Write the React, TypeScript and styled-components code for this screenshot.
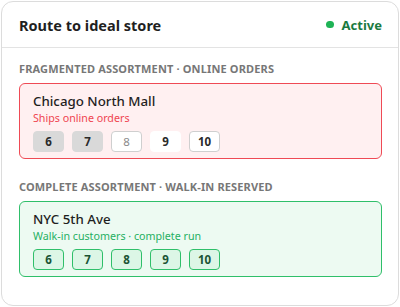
import React from "react"
import styled, { createGlobalStyle } from "styled-components"

const GlobalStyle = createGlobalStyle`
	* {
		box-sizing: border-box;
	}
	body {
		margin: 0;
		background: #ffffff;
		font-family: "Noto Sans", "Open Sans", sans-serif;
	}
`

type Tone = "red" | "green"
type ChipKind = "filled" | "muted" | "plain" | "outlined" | "good"

const tones = {
	red: { border: "#ef4a55", bg: "#fff0f1", sub: "#ef4450" },
	green: { border: "#2fbf6a", bg: "#edfaf2", sub: "#26b062" },
}

const chipStyles: Record<ChipKind, { bg: string; border: string; color: string; weight: number }> = {
	filled: { bg: "#d9d9d9", border: "#d9d9d9", color: "#2a2a2a", weight: 700 },
	muted: { bg: "#ffffff", border: "#cfcfcf", color: "#8a8a8a", weight: 400 },
	plain: { bg: "#ffffff", border: "#ffffff", color: "#2a2a2a", weight: 700 },
	outlined: { bg: "#ffffff", border: "#cfcfcf", color: "#2a2a2a", weight: 700 },
	good: { bg: "#dcf6e6", border: "#2fbf6a", color: "#1a5434", weight: 700 },
}

const Panel = styled.div`
	margin: 1px;
	width: 398px;
	height: 305px;
	border: 1.5px solid #dcdcdc;
	border-radius: 12px;
	background: #ffffff;
	overflow: hidden;
`

const Header = styled.div`
	display: flex;
	align-items: center;
	justify-content: space-between;
	height: 46px;
	padding: 0 16px 0 17px;
	border-bottom: 1.5px solid #e3e3e3;
`

const Title = styled.h1`
	margin: 0;
	font-size: 14.5px;
	font-weight: 700;
	color: #1f1f1f;
`

const Status = styled.div`
	display: flex;
	align-items: center;
	gap: 8px;
	font-size: 13px;
	font-weight: 700;
	color: #1b7a3f;
`

const Dot = styled.span`
	width: 7.5px;
	height: 7.5px;
	border-radius: 50%;
	background: #1fb356;
`

const Body = styled.div`
	display: flex;
	flex-direction: column;
	padding: 14px 16px 0 17px;
`

const Section = styled.section`
	display: flex;
	flex-direction: column;
	gap: 7px;
	& + & {
		margin-top: 21px;
	}
`

const Label = styled.div`
	font-size: 11px;
	line-height: 14px;
	font-weight: 700;
	letter-spacing: 0.15px;
	color: #777777;
	text-transform: uppercase;
`

const StoreCard = styled.div<{ $tone: Tone }>`
	display: flex;
	flex-direction: column;
	height: 76px;
	padding: 8px 13px 0;
	border: 1.5px solid ${({ $tone }) => tones[$tone].border};
	border-radius: 6px;
	background: ${({ $tone }) => tones[$tone].bg};
`

const StoreName = styled.div`
	font-size: 13.3px;
	line-height: 18px;
	font-weight: 500;
	color: #1f1f1f;
`

const StoreNote = styled.div<{ $tone: Tone }>`
	font-size: 10.7px;
	line-height: 16px;
	color: ${({ $tone }) => tones[$tone].sub};
`

const ChipRow = styled.div`
	display: flex;
	gap: 8px;
	margin-top: 5px;
`

const Chip = styled.span<{ $kind: ChipKind }>`
	display: flex;
	align-items: center;
	justify-content: center;
	width: 31px;
	height: 21px;
	border-radius: 4px;
	border: 1.5px solid ${({ $kind }) => chipStyles[$kind].border};
	background: ${({ $kind }) => chipStyles[$kind].bg};
	color: ${({ $kind }) => chipStyles[$kind].color};
	font-size: 11.5px;
	font-weight: ${({ $kind }) => chipStyles[$kind].weight};
`

const stores: { label: string; name: string; note: string; tone: Tone; chips: [string, ChipKind][] }[] = [
	{
		label: "Fragmented assortment · Online orders",
		name: "Chicago North Mall",
		note: "Ships online orders",
		tone: "red",
		chips: [
			["6", "filled"],
			["7", "filled"],
			["8", "muted"],
			["9", "plain"],
			["10", "outlined"],
		],
	},
	{
		label: "Complete assortment · Walk-in reserved",
		name: "NYC 5th Ave",
		note: "Walk-in customers · complete run",
		tone: "green",
		chips: [
			["6", "good"],
			["7", "good"],
			["8", "good"],
			["9", "good"],
			["10", "good"],
		],
	},
]

export default function App() {
	return (
		<>
			<GlobalStyle />
			<Panel>
				<Header>
					<Title>Route to ideal store</Title>
					<Status>
						<Dot />
						Active
					</Status>
				</Header>
				<Body>
					{stores.map((store) => (
						<Section key={store.name}>
							<Label>{store.label}</Label>
							<StoreCard $tone={store.tone}>
								<StoreName>{store.name}</StoreName>
								<StoreNote $tone={store.tone}>{store.note}</StoreNote>
								<ChipRow>
									{store.chips.map(([size, kind]) => (
										<Chip $kind={kind} key={size}>
											{size}
										</Chip>
									))}
								</ChipRow>
							</StoreCard>
						</Section>
					))}
				</Body>
			</Panel>
		</>
	)
}
